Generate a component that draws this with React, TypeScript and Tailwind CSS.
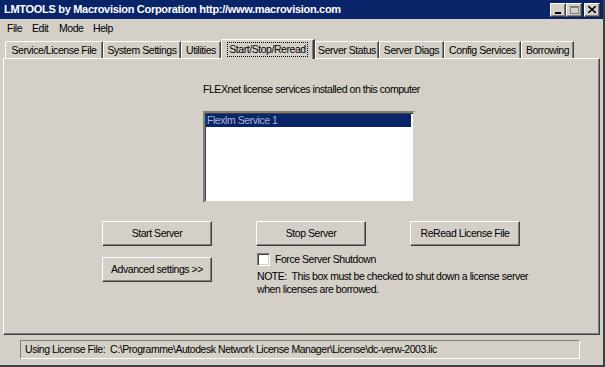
import React from 'react';

const font = {
  fontFamily: '"Liberation Sans", Arial, sans-serif',
  fontSize: '10.5px',
  letterSpacing: '-0.45px',
};

const tabs = [
  { label: 'Service/License File', w: 'w-[98px]' },
  { label: 'System Settings', w: 'w-[78px]' },
  { label: 'Utilities', w: 'w-[40px]' },
  { label: 'Start/Stop/Reread', w: 'w-[94px]', active: true },
  { label: 'Server Status', w: 'w-[64px]' },
  { label: 'Server Diags', w: 'w-[65px]' },
  { label: 'Config Services', w: 'w-[77px]' },
  { label: 'Borrowing', w: 'w-[53px]' },
];

function Button({ children }: { children: React.ReactNode }) {
  return (
    <div className="w-[110px] h-[25px] shrink-0 flex items-center justify-center bg-[#d4d0c8] border border-t-white border-l-white border-r-[#404040] border-b-[#404040] shadow-[inset_-1px_-1px_0_#808080] text-black">
      {children}
    </div>
  );
}

function CaptionButton({ children }: { children: React.ReactNode }) {
  return (
    <div className="w-[16px] h-[14px] bg-[#d4d0c8] border border-t-white border-l-white border-r-[#404040] border-b-[#404040] shadow-[inset_-1px_-1px_0_#808080] flex items-center justify-center">
      {children}
    </div>
  );
}

export default function App() {
  return (
    <div className="w-[605px] h-[367px] bg-[#d4d0c8] leading-[13px] text-black overflow-hidden flex flex-col border-r-2 border-b-2 border-r-[#404040] border-b-[#404040]" style={font}>
      {/* Title bar */}
      <div className="h-[19px] bg-[#0a246a] flex items-center pl-[4px] pr-[3px] shrink-0">
        <span className="text-white font-bold text-[11px] tracking-[-0.3px]">
          LMTOOLS by Macrovision Corporation http://www.macrovision.com
        </span>
        <div className="ml-auto flex items-center">
          <CaptionButton>
            <div className="w-[6px] h-[2px] bg-black mt-[6px]" />
          </CaptionButton>
          <CaptionButton>
            <div className="w-[9px] h-[8px] border border-[#808080] border-t-2" />
          </CaptionButton>
          <div className="w-[2px]" />
          <CaptionButton>
            <svg width="8" height="7" viewBox="0 0 8 7">
              <path d="M0 0 L8 7 M8 0 L0 7" stroke="black" strokeWidth="1.6" />
            </svg>
          </CaptionButton>
        </div>
      </div>

      {/* Menu */}
      <div className="h-[18px] flex items-center pl-[7px] shrink-0">
        <span className="w-[25px]">File</span>
        <span className="w-[27px]">Edit</span>
        <span className="w-[34px]">Mode</span>
        <span>Help</span>
      </div>

      {/* Tabs */}
      <div className="flex items-end h-[20px] pl-[5px] mt-[1px] shrink-0 relative z-10">
        {tabs.map((t) =>
          t.active ? (
            <div key={t.label} className={`${t.w} h-[20px] bg-[#d4d0c8] border-t border-l border-t-white border-l-white border-r-2 border-r-[#404040] shadow-[inset_-1px_0_0_#808080] flex items-start justify-center pt-[3px] -mb-[1px]`}>
              <span className="px-[1px] outline outline-1 outline-dotted outline-black whitespace-nowrap">{t.label}</span>
            </div>
          ) : (
            <div key={t.label} className={`${t.w} h-[17px] bg-[#d4d0c8] border-t border-l border-t-white border-l-white border-r border-r-[#404040] shadow-[inset_-1px_0_0_#808080] flex items-center justify-center rounded-tl-[2px]`}>
              <span className="whitespace-nowrap">{t.label}</span>
            </div>
          )
        )}
      </div>

      {/* Panel */}
      <div className="ml-[3px] w-[597px] h-[277px] border border-t-white border-l-white border-r-[#404040] border-b-[#404040] shadow-[inset_-1px_-1px_0_#808080] flex flex-col pl-[98px] shrink-0">
        <div className="mt-[24px] ml-[101px] whitespace-nowrap">FLEXnet license services installed on this computer</div>
        <div className="mt-[15px] ml-[101px] w-[212px] h-[92px] bg-white border-2 border-t-[#808080] border-l-[#808080] border-r-[#d4d0c8] border-b-[#d4d0c8] shadow-[inset_1px_1px_0_#404040,inset_-1px_-1px_0_#ffffff] p-[1px] pr-[2px]">
          <div className="h-[13px] bg-[#0a246a] text-[#a8b4d0] pl-[1px] leading-[13px]">Flexlm Service 1</div>
        </div>
        <div className="mt-[18px] flex gap-[44px]">
          <div className="flex flex-col gap-[11px] shrink-0">
            <Button>Start Server</Button>
            <Button>Advanced settings &gt;&gt;</Button>
          </div>
          <div className="flex flex-col w-[110px] shrink-0">
            <Button>Stop Server</Button>
            <div className="flex items-center mt-[7px] ml-[1px] whitespace-nowrap">
              <div className="w-[13px] h-[13px] shrink-0 bg-white border border-t-[#808080] border-l-[#808080] border-r-white border-b-white shadow-[inset_1px_1px_0_#404040,inset_-1px_-1px_0_#d4d0c8]" />
              <span className="ml-[5px]">Force Server Shutdown</span>
            </div>
            <div className="mt-[4px] ml-[1px] whitespace-nowrap">
              <div>NOTE:&nbsp; This box must be checked to shut down a license server</div>
              <div>when licenses are borrowed.</div>
            </div>
          </div>
          <div className="shrink-0">
            <Button>ReRead License File</Button>
          </div>
        </div>
      </div>

      {/* Status */}
      <div className="mt-[5px] ml-[20px] w-[560px] h-[19px] border border-t-[#808080] border-l-[#808080] border-r-white border-b-white flex items-center pl-[4px] shrink-0">
        <span className="whitespace-pre">Using License File:  C:\Programme\Autodesk Network License Manager\License\dc-verw-2003.lic</span>
      </div>
    </div>
  );
}
